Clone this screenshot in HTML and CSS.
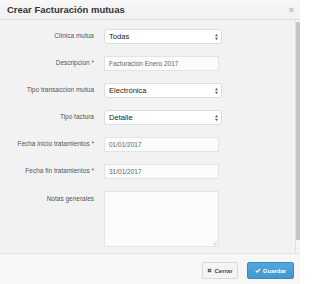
FILE: index.html
```html
<!DOCTYPE html>
<html lang="es">
<head>
<meta charset="utf-8">
<title>Crear Facturación mutuas</title>
<link rel="stylesheet" href="styles.css">
</head>
<body>
<div class="modal">
  <div class="modal-header">
    <h4 class="modal-title">Crear Facturación mutuas</h4>
    <span class="close">×</span>
  </div>
  <div class="modal-middle">
    <div class="modal-body">
      <div class="form-row">
        <label class="form-label">Clínica mutua</label>
        <div class="select"><span>Todas</span><svg class="arrows" viewBox="0 0 4 8"><path d="M0 3 L2 0 L4 3 Z M0 5 L2 8 L4 5 Z"/></svg></div>
      </div>
      <div class="form-row">
        <label class="form-label">Descripcion *</label>
        <div class="input">Facturación Enero 2017</div>
      </div>
      <div class="form-row">
        <label class="form-label">Tipo transaccion mutua</label>
        <div class="select"><span>Electrónica</span><svg class="arrows" viewBox="0 0 4 8"><path d="M0 3 L2 0 L4 3 Z M0 5 L2 8 L4 5 Z"/></svg></div>
      </div>
      <div class="form-row">
        <label class="form-label">Tipo factura</label>
        <div class="select"><span>Detalle</span><svg class="arrows" viewBox="0 0 4 8"><path d="M0 3 L2 0 L4 3 Z M0 5 L2 8 L4 5 Z"/></svg></div>
      </div>
      <div class="form-row">
        <label class="form-label">Fecha inicio tratamientos *</label>
        <div class="input">01/01/2017</div>
      </div>
      <div class="form-row">
        <label class="form-label">Fecha fin tratamientos *</label>
        <div class="input">31/01/2017</div>
      </div>
      <div class="form-row top">
        <label class="form-label">Notas generales</label>
        <div class="textarea"><svg class="grip" viewBox="0 0 5 5"><path d="M5 0 L0 5 M5 2.5 L2.5 5"/></svg></div>
      </div>
    </div>
    <div class="scrollbar"><div class="thumb"></div></div>
  </div>
  <div class="modal-footer">
    <button class="btn btn-default"><svg class="ico" viewBox="0 0 6 6"><path d="M1 1 L5 5 M5 1 L1 5"/></svg>Cerrar</button>
    <button class="btn btn-primary"><svg class="ico" viewBox="0 0 7 6"><path d="M0.8 3.2 L2.6 5 L6.2 1"/></svg>Guardar</button>
  </div>
</div>
</body>
</html>
```
FILE: styles.css
```css
html, body {
  margin: 0;
  padding: 0;
}
body {
  width: 300px;
  height: 284px;
  overflow: hidden;
  font-family: "Liberation Sans", Arial, sans-serif;
  color: #333;
}
.modal {
  width: 300px;
  height: 284px;
  display: flex;
  flex-direction: column;
  background: #f2f2f2;
}
.modal-header {
  height: 19px;
  flex: none;
  display: flex;
  align-items: center;
  justify-content: space-between;
  padding: 0 6px 0 7px;
  background: linear-gradient(#f7f7f7, #f1f1f1);
  border-bottom: 1px solid #dedede;
}
.modal-title {
  margin: 0;
  font-size: 9.5px;
  font-weight: bold;
  color: #333;
  line-height: 1;
  padding-top: 1px;
}
.close {
  font-size: 9px;
  font-weight: bold;
  color: #b5b5b5;
  line-height: 1;
  margin-top: 1px;
}
.modal-middle {
  flex: 1;
  display: flex;
  min-height: 0;
}
.modal-body {
  flex: 1;
  padding-top: 9px;
  display: flex;
  flex-direction: column;
  gap: 12px;
  background: #f2f2f2;
}
.form-row {
  display: grid;
  grid-template-columns: 94px auto;
  column-gap: 10px;
  align-items: center;
}
.form-row.top {
  align-items: start;
}
.form-row.top .form-label {
  padding-top: 5px;
}
.form-label {
  font-size: 6.5px;
  color: #555;
  text-align: right;
  line-height: 1;
}
.select {
  width: 118px;
  height: 15px;
  box-sizing: border-box;
  border: 1px solid #dcdcdc;
  border-radius: 3px;
  background: #fff;
  display: flex;
  align-items: center;
  justify-content: space-between;
  padding: 0 3px 0 4px;
  font-size: 7.6px;
  color: #222;
}
.arrows {
  width: 3px;
  height: 6px;
  fill: #555;
}
.input {
  width: 115px;
  height: 15px;
  box-sizing: border-box;
  border: 1px solid #e3e3e3;
  background: #fbfbfb;
  display: flex;
  align-items: center;
  padding-left: 4px;
  font-size: 6.5px;
  color: #666;
}
.textarea {
  width: 115px;
  height: 56px;
  box-sizing: border-box;
  border: 1px solid #e3e3e3;
  background: #fbfbfb;
  display: flex;
  align-items: flex-end;
  justify-content: flex-end;
  padding: 0 1px 1px 0;
}
.grip {
  width: 4px;
  height: 4px;
  stroke: #aaa;
  stroke-width: 0.7;
}
.scrollbar {
  width: 4px;
  flex: none;
  border-left: 1px solid #e0e0e0;
  background: #f4f4f4;
  padding-top: 2px;
}
.thumb {
  height: 218px;
  background: #c4c4c4;
  border-radius: 1px;
}
.modal-footer {
  height: 31px;
  flex: none;
  border-top: 1px solid #e3e3e3;
  background: #f7f7f7;
  display: flex;
  justify-content: flex-end;
  align-items: flex-start;
  padding: 8px 6px 0 0;
  box-sizing: border-box;
  gap: 9px;
}
.btn {
  height: 17px;
  box-sizing: border-box;
  font-family: "Liberation Sans", Arial, sans-serif;
  font-size: 6px;
  font-weight: bold;
  border-radius: 2px;
  display: flex;
  align-items: center;
  justify-content: center;
  gap: 2px;
  padding: 0;
  margin: 0;
}
.btn-default {
  width: 36px;
  background: #f4f4f4;
  border: 1px solid #d9d9d9;
  color: #444;
}
.btn-primary {
  width: 47px;
  background: linear-gradient(#52a7db, #4398cf);
  border: 1px solid #3a89be;
  color: #fff;
}
.ico {
  width: 5px;
  height: 5px;
  fill: none;
  stroke-width: 1.4;
}
.btn-default .ico {
  stroke: #444;
}
.btn-primary .ico {
  width: 6px;
  stroke: #fff;
}
```
